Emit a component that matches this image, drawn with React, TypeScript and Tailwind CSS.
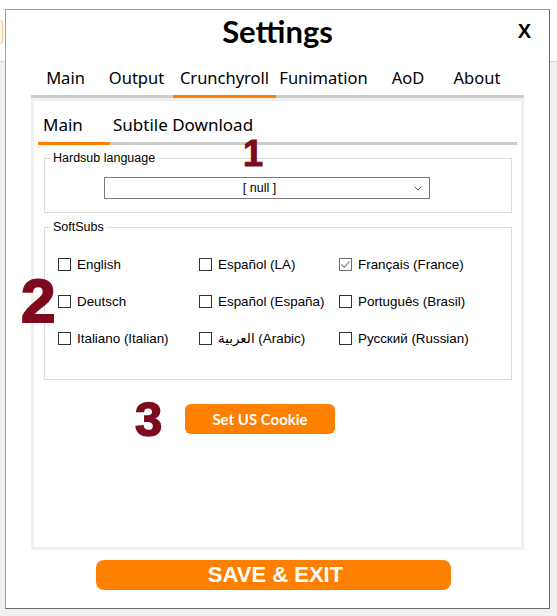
const topTabs = [
  { label: "Main", w: "w-[69px]" },
  { label: "Output", w: "w-[73px]" },
  { label: "Crunchyroll", w: "w-[103px]", active: true },
  { label: "Funimation", w: "w-[95px]" },
  { label: "AoD", w: "w-[74px]" },
  { label: "About", w: "w-[64px]" },
];

const softSubs = [
  { label: "English" },
  { label: "Español (LA)" },
  { label: "Français (France)", checked: true },
  { label: "Deutsch" },
  { label: "Español (España)" },
  { label: "Português (Brasil)" },
  { label: "Italiano (Italian)" },
  { label: "العربية (Arabic)" },
  { label: "Русский (Russian)" },
];

const Checkbox = ({ checked }: { checked?: boolean }) => (
  <span
    className={
      checked
        ? "flex h-[13px] w-[13px] shrink-0 items-center justify-center border border-[#6f6f6f] bg-white"
        : "h-[13px] w-[13px] shrink-0 border border-[#333333] bg-white"
    }
  >
    {checked && (
      <svg width="11" height="11" viewBox="0 0 11 11" fill="none">
        <path d="M1.5 5.5 L4.3 8.3 L9.5 2.5" stroke="#6f6f6f" strokeWidth="1.1" />
      </svg>
    )}
  </span>
);

const GroupBox = ({
  title,
  className,
  children,
}: {
  title: string;
  className: string;
  children: React.ReactNode;
}) => (
  <div className={`relative ml-[10px] w-[468px] border border-[#dcdcdc] ${className}`}>
    <span className="absolute left-[5px] top-[-8px] bg-white px-[3px] text-[12.5px] leading-[14px]">
      {title}
    </span>
    {children}
  </div>
);

export default function App() {
  return (
    <div className="relative min-h-screen bg-[#f0f0f0] font-['Liberation_Sans','DejaVu_Sans',sans-serif] text-black">
      {/* app behind the dialog */}
      <div className="h-[62px] border-b border-[#d9d9d9] bg-white pt-[20px]">
        <div className="h-[24px] w-[3px] rounded-r-[3px] border border-l-0 border-[#ffc28c]" />
      </div>

      {/* dialog */}
      <div className="absolute left-[5px] top-[9px] h-[600px] w-[545px] border border-t-[#a0a0a0] border-l-[#a0a0a0] border-r-[#6a6a6a] border-b-[#6a6a6a] bg-white">
        <h1 className="pt-[2px] text-center font-['Lato',sans-serif] text-[31px] font-bold leading-[38px]">
          Settings
        </h1>
        <button className="absolute right-[18px] top-[11px] text-[20px] font-bold leading-[20px]">
          X
        </button>

        {/* main tabs */}
        <div className="ml-[25px] mt-[16px] flex w-[493px] font-['Noto_Sans',sans-serif] text-[16.5px] leading-[24px]">
          {topTabs.map((t) => (
            <div
              key={t.label}
              className={`${t.w} border-b-[3px] pb-[5px] text-center ${
                t.active ? "border-[#ff8000]" : "border-[#cccccc]"
              }`}
            >
              {t.label}
            </div>
          ))}
          <div className="flex-1 border-b-[3px] border-[#cccccc]" />
        </div>

        {/* panel */}
        <div className="ml-[25px] h-[452px] w-[493px] border-[3px] border-[#f0f0f0] bg-white">
          <div className="mx-[4px] flex pt-[12px] font-['Noto_Sans',sans-serif] text-[17px] leading-[24px]">
            <div className="w-[72px] border-b-[3px] border-[#ff8000] pb-[5px] pl-[5px]">Main</div>
            <div className="flex-1 border-b-[3px] border-[#cccccc] pb-[5px] pl-[3px]">Subtile Download</div>
          </div>

          <GroupBox title="Hardsub language" className="mt-[13px] h-[55px]">
            <div className="ml-[59px] mt-[18px] flex h-[22px] w-[326px] items-center border border-[#7a7a7a] text-[12.5px]">
              <span className="flex-1 text-center">[ null ]</span>
              <svg width="8" height="5" viewBox="0 0 8 5" fill="none" className="mr-[7px]">
                <path d="M0.5 0.5 L4 4 L7.5 0.5" stroke="#555555" strokeWidth="1" />
              </svg>
            </div>
          </GroupBox>

          <GroupBox title="SoftSubs" className="mt-[14px] h-[153px]">
            <div className="grid grid-cols-[141px_140px_1fr] gap-y-[24px] pl-[13px] pt-[30px] text-[13.4px]">
              {softSubs.map((s) => (
                <label key={s.label} className="flex h-[13px] items-center gap-[6px] whitespace-nowrap">
                  <Checkbox checked={s.checked} />
                  <span className="leading-[15px]">{s.label}</span>
                </label>
              ))}
            </div>
          </GroupBox>

          <button className="ml-[151px] mt-[24px] h-[30px] w-[150px] rounded-[6px] bg-[#ff8000] font-['Lato',sans-serif] text-[15px] font-bold text-white">
            Set US Cookie
          </button>
        </div>

        <button className="ml-[90px] mt-[10px] h-[30px] w-[355px] rounded-[8px] bg-[#ff8000] pl-[4px] text-[22px] font-bold leading-[30px] text-white">
          SAVE &amp; EXIT
        </button>

        {/* annotation numbers */}
        <span className="absolute left-[237px] top-[126px] text-[36px] font-bold leading-[36px] text-[#7d0a1d] [-webkit-text-stroke:1px_#7d0a1d]">1</span>
        <span className="absolute left-[15px] top-[260px] text-[62px] font-bold leading-[62px] text-[#7d0a1d] [-webkit-text-stroke:2px_#7d0a1d]">2</span>
        <span className="absolute left-[129px] top-[385px] text-[49px] font-bold leading-[49px] text-[#7d0a1d] [-webkit-text-stroke:1.5px_#7d0a1d]">3</span>
      </div>
    </div>
  );
}
